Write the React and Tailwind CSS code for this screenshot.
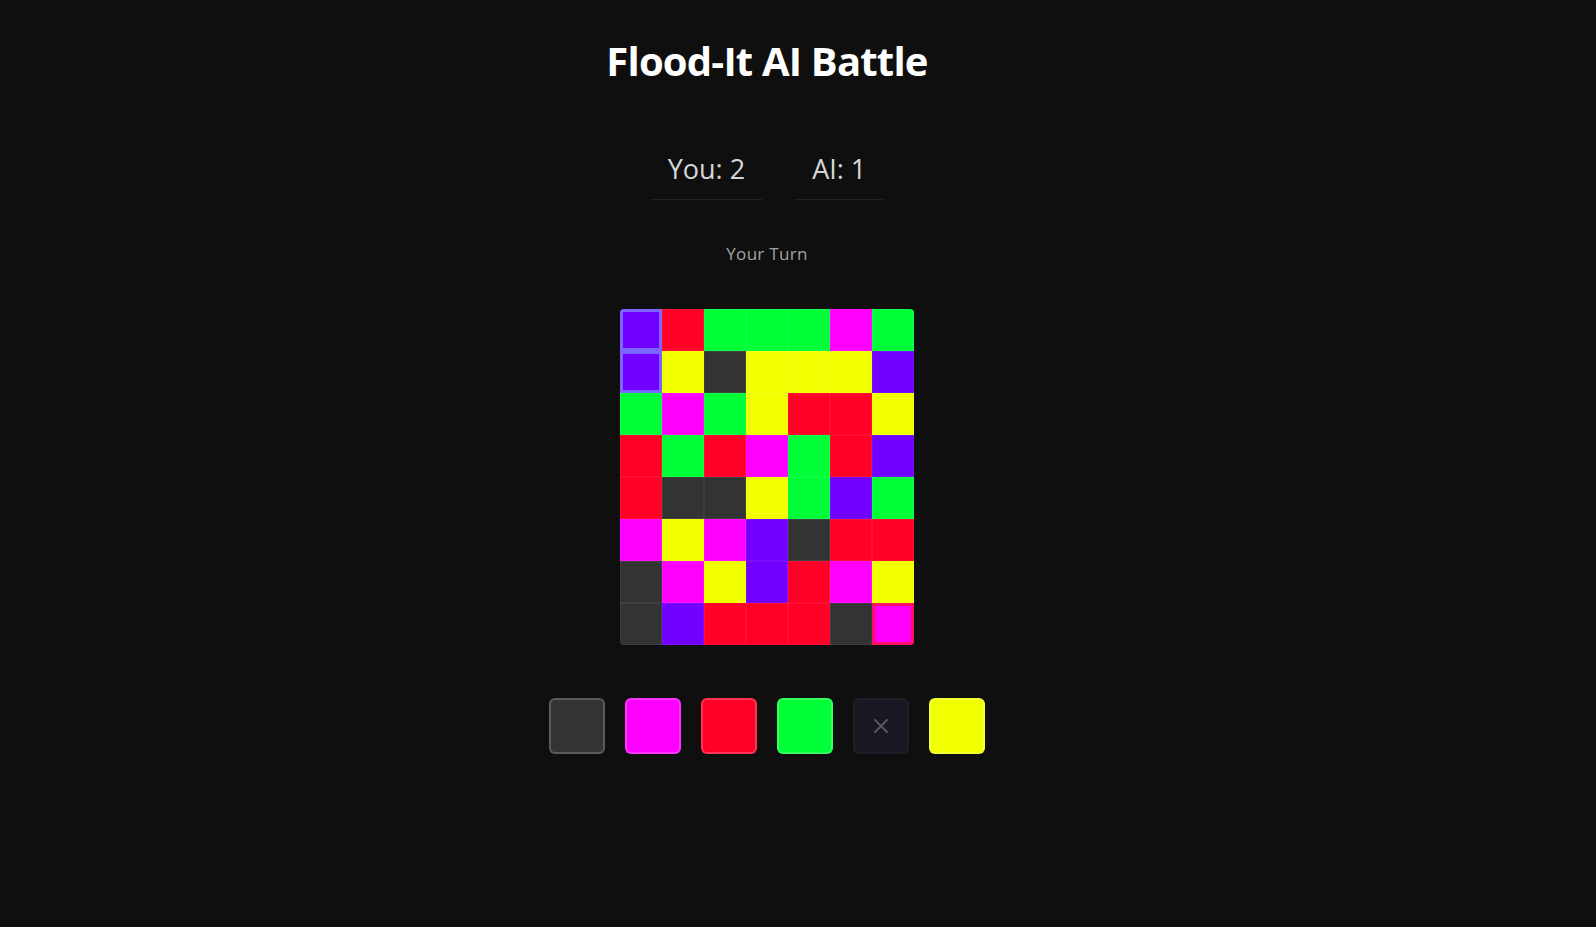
import React from "react";

const C = {
  P: "bg-[#7100ff]",
  R: "bg-[#ff0026]",
  G: "bg-[#00ff38]",
  M: "bg-[#ff00ff]",
  Y: "bg-[#f2ff00]",
  D: "bg-[#333333]",
};

const rows = [
  "PRGGGMG",
  "PYDYYYP",
  "GMGYRRY",
  "RGRMGRP",
  "RDDYGPG",
  "MYMPDRR",
  "DMYPRMY",
  "DPRRRDM",
];

const player = new Set(["0-0", "1-0"]);
const ai = new Set(["7-6"]);

function Cell({ c, r, i }) {
  const key = `${r}-${i}`;
  let border = "border border-white/[0.06]";
  if (player.has(key)) border = "border-[3px] border-[#7d66ff]";
  if (ai.has(key)) border = "border-[3px] border-[#ff0f62]";
  return <div className={`w-[42px] h-[42px] box-border ${C[c]} ${border}`} />;
}

export default function App() {
  return (
    <div
      className="min-h-screen bg-[#0f0f0f]"
      style={{ fontFamily: '"Open Sans", "Noto Sans", sans-serif' }}
    >
      <div className="w-[1534px] flex flex-col items-center pt-[41px]">
        <h1 className="text-[40px] font-bold leading-none text-white tracking-[-0.8px]">
          Flood-It AI Battle
        </h1>

        <div className="flex gap-[33px] mt-[74px]">
          <div className="px-[17px] pb-[17px] border-b border-[#222222] text-[27px] font-medium leading-none text-[#d6d6d6]">
            You: 2
          </div>
          <div className="px-[17px] pb-[17px] border-b border-[#222222] text-[27px] font-medium leading-none text-[#d6d6d6]">
            AI: 1
          </div>
        </div>

        <div className="mt-[45px] text-[17px] leading-none text-[#a3a3a3] tracking-[0.3px]">
          Your Turn
        </div>

        <div className="mt-[47px] grid grid-cols-7 rounded-[4px] overflow-hidden">
          {rows.map((row, r) =>
            row.split("").map((c, i) => <Cell key={`${r}-${i}`} c={c} r={r} i={i} />)
          )}
        </div>

        <div className="mt-[53px] flex gap-[20px]">
          <button className="w-[56px] h-[56px] rounded-[6px] bg-[#333333] border-2 border-white/20" />
          <button className="w-[56px] h-[56px] rounded-[6px] bg-[#ff00ff] border-2 border-white/20" />
          <button className="w-[56px] h-[56px] rounded-[6px] bg-[#ff0026] border-2 border-white/20" />
          <button className="w-[56px] h-[56px] rounded-[6px] bg-[#00ff38] border-2 border-white/20" />
          <button className="w-[56px] h-[56px] rounded-[6px] bg-[#1a1722] border-2 border-[#201d28] flex items-center justify-center">
            <svg width="14" height="14" viewBox="0 0 14 14">
              <path d="M1 1L13 13M13 1L1 13" stroke="#575757" strokeWidth="2" strokeLinecap="round" />
            </svg>
          </button>
          <button className="w-[56px] h-[56px] rounded-[6px] bg-[#f2ff00] border-2 border-white/20" />
        </div>
      </div>
    </div>
  );
}
